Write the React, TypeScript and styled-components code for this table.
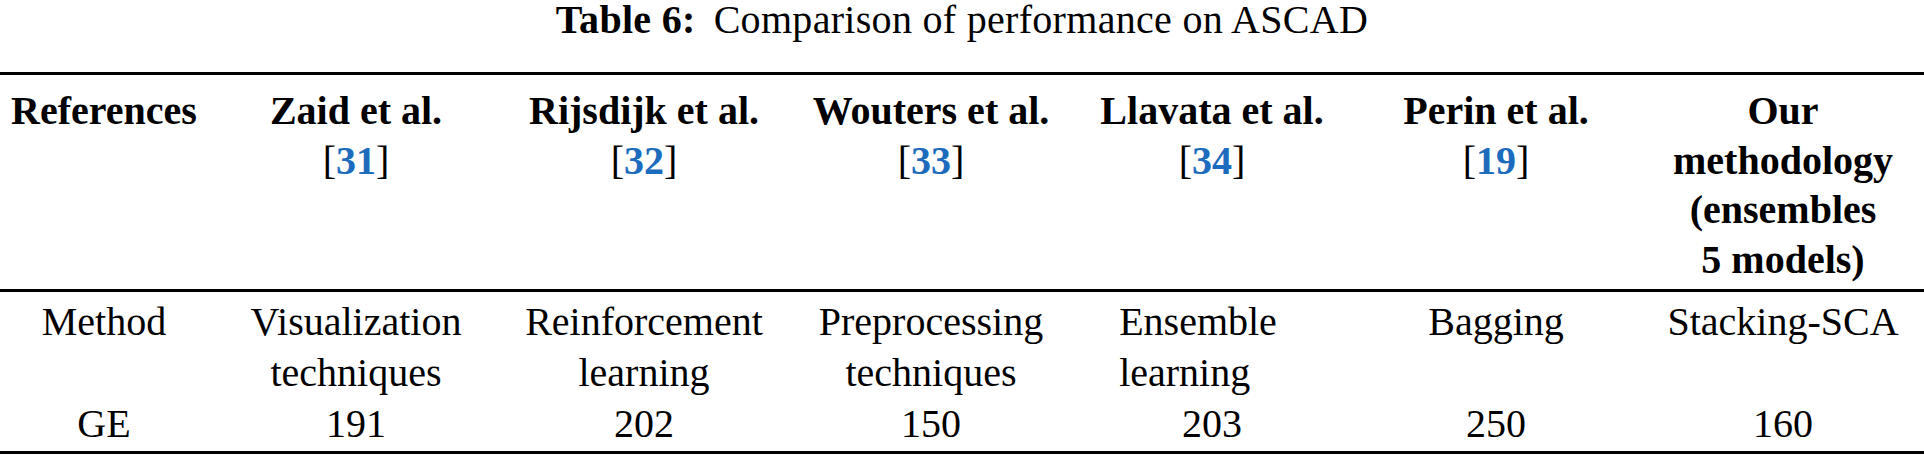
import React from "react";
import styled, { createGlobalStyle } from "styled-components";

// column grid, centres picked to line up with the printed table
const COLS = "208px 296px 280px 294px 268px 300px 274px";
const SERIF = '"Liberation Serif", serif';

const GlobalStyle = createGlobalStyle`
  html, body {
    margin: 0;
    padding: 0;
    background: #ffffff;
  }
  body {
    font-family: ${SERIF};
    color: #000000;
  }
`;

const Page = styled.div`
  width: 1924px;
  font-family: ${SERIF};
  font-size: 40px;
  color: #000;
`;

const Caption = styled.div`
  height: 40px;
  line-height: 40px;
  margin-bottom: 32px;
  text-align: center;
  white-space: nowrap;
  letter-spacing: 0.3px;
`;

const CaptionLabel = styled.span`
  font-weight: 700;
  margin-right: 18px;
`;

const Section = styled.div<{
  $padTop: number;
  $padBottom: number;
  $lineHeight: number;
  $topRule?: boolean;
}>`
  display: grid;
  grid-template-columns: ${COLS};
  padding: ${({ $padTop }) => $padTop}px 0 ${({ $padBottom }) => $padBottom}px;
  border-top: ${({ $topRule }) => ($topRule ? "3px solid #000" : "none")};
  border-bottom: 3px solid #000;
  line-height: ${({ $lineHeight }) => $lineHeight}px;
`;

const Cell = styled.div<{ $bold?: boolean }>`
  font-family: ${SERIF};
  text-align: center;
  white-space: nowrap;
  font-weight: ${({ $bold }) => ($bold ? 700 : 400)};
`;

// ragged-right block, sits a little left of the column centre like the print
const LeftBlock = styled.div`
  display: inline-block;
  text-align: left;
  margin-right: 28px;
`;

const Line = styled.div``;

const Cite = styled.span`
  font-weight: 700;
  color: #1c6bbd;
`;

const Bracket = styled.span`
  font-weight: 400;
`;

type HeadCol = { lines: string[]; cite?: string };

const headCols: HeadCol[] = [
  { lines: ["References"] },
  { lines: ["Zaid et al."], cite: "31" },
  { lines: ["Rijsdijk et al."], cite: "32" },
  { lines: ["Wouters et al."], cite: "33" },
  { lines: ["Llavata et al."], cite: "34" },
  { lines: ["Perin et al."], cite: "19" },
  { lines: ["Our", "methodology", "(ensembles", "5 models)"] },
];

type BodyCell = { lines: string[]; left?: boolean };

const bodyRows: BodyCell[][] = [
  [
    { lines: ["Method"] },
    { lines: ["Visualization", "techniques"] },
    { lines: ["Reinforcement", "learning"] },
    { lines: ["Preprocessing", "techniques"] },
    { lines: ["Ensemble", "learning"], left: true },
    { lines: ["Bagging"] },
    { lines: ["Stacking-SCA"] },
  ],
  ["GE", "191", "202", "150", "203", "250", "160"].map((v) => ({ lines: [v] })),
];

function App(): JSX.Element {
  return (
    <Page>
      <GlobalStyle />
      <Caption>
        <CaptionLabel>Table 6:</CaptionLabel>
        Comparison of performance on ASCAD
      </Caption>

      <Section $topRule $padTop={11} $padBottom={5} $lineHeight={49.5}>
        {headCols.map((col, i) => (
          <Cell key={i} $bold>
            {col.lines.map((l) => (
              <Line key={l}>{l}</Line>
            ))}
            {col.cite && (
              <Line>
                <Bracket>[</Bracket>
                <Cite>{col.cite}</Cite>
                <Bracket>]</Bracket>
              </Line>
            )}
          </Cell>
        ))}
      </Section>

      <Section $padTop={4} $padBottom={2} $lineHeight={51}>
        {bodyRows.map((row, r) =>
          row.map((cell, c) => (
            <Cell key={`${r}-${c}`}>
              {cell.left ? (
                <LeftBlock>
                  {cell.lines.map((l) => (
                    <Line key={l}>{l}</Line>
                  ))}
                </LeftBlock>
              ) : (
                cell.lines.map((l) => <Line key={l}>{l}</Line>)
              )}
            </Cell>
          ))
        )}
      </Section>
    </Page>
  );
}

export default App;
